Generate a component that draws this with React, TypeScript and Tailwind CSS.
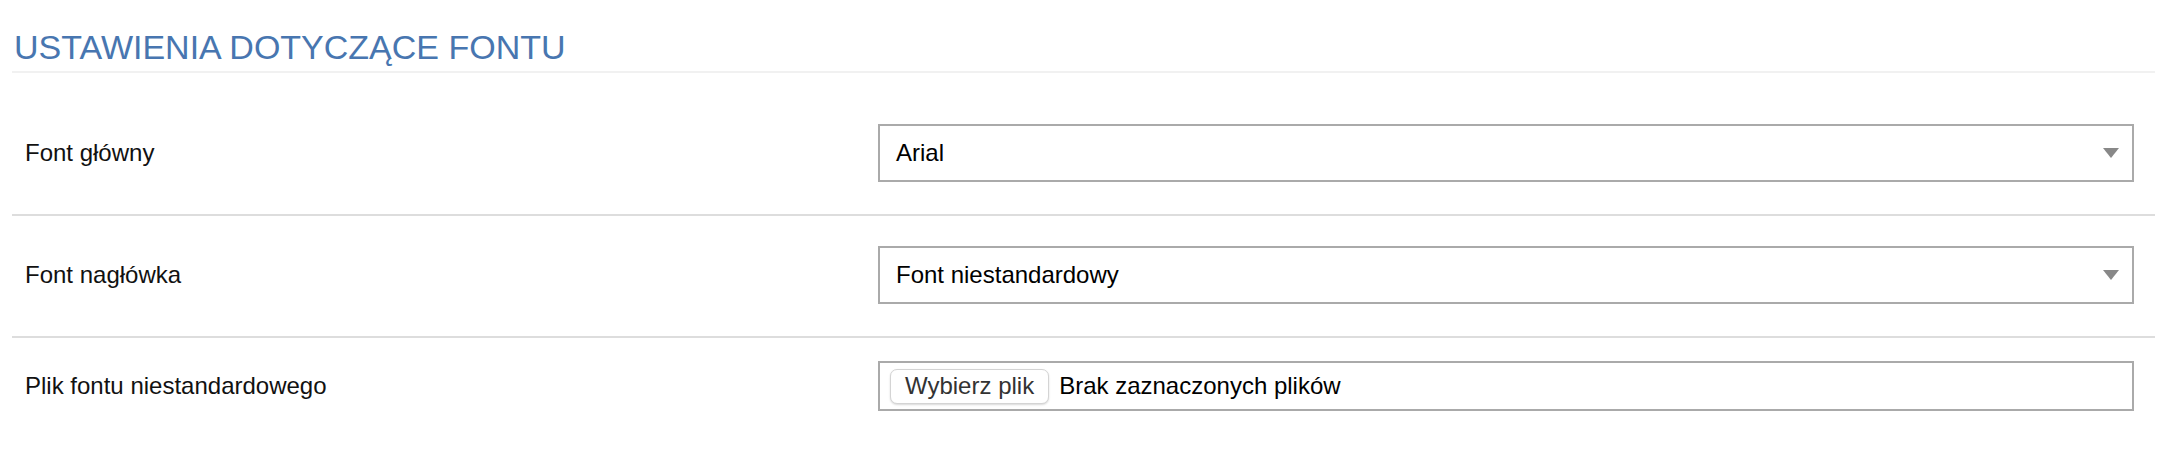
import { useState } from "react"

const font = { fontFamily: '"Liberation Sans", Arial, sans-serif' }

function Caret() {
  return (
    <svg width="16" height="10" viewBox="0 0 16 10" className="shrink-0">
      <path d="M0 0 L16 0 L8 10 Z" fill="#888888" />
    </svg>
  )
}

interface SelectRowProps {
  label: string
  value: string
}

function SelectRow({ label, value }: SelectRowProps) {
  return (
    <div className="flex items-center border-b-2 border-[#dddddd] pt-[30px] pb-[32px]">
      <div className="w-[866px] shrink-0 pl-[13px] text-[24px] text-[#111111]">{label}</div>
      <div className="flex-1 pr-[21px]">
        <div className="flex h-[58px] items-center justify-between border-2 border-[#aaaaaa] bg-white pl-[16px] pr-[13px] text-[24px] text-black">
          <span>{value}</span>
          <Caret />
        </div>
      </div>
    </div>
  )
}

export default function App() {
  const [fonts] = useState([
    { label: "Font główny", value: "Arial" },
    { label: "Font nagłówka", value: "Font niestandardowy" },
  ])

  return (
    <div className="min-h-[450px] bg-white pl-[12px] pr-[9px]" style={font}>
      {/* Heading */}
      <div className="border-b-2 border-[#f1f1f1] pt-[30px] pb-[7px]">
        <h2 className="pl-[2px] text-[34px] leading-[34px] uppercase text-[#4876b0]">
          Ustawienia dotyczące fontu
        </h2>
      </div>

      <div className="pt-[21px]">
        {fonts.map((f) => (
          <SelectRow key={f.label} label={f.label} value={f.value} />
        ))}

        {/* Custom font file */}
        <div className="flex items-center py-[23px]">
          <div className="w-[866px] shrink-0 pl-[13px] text-[24px] text-[#111111]">
            Plik fontu niestandardowego
          </div>
          <div className="flex-1 pr-[21px]">
            <div className="flex h-[50px] items-center gap-[10px] border-2 border-[#aaaaaa] bg-white pl-[10px] text-[24px] text-black">
              <span className="flex h-[35px] items-center rounded-[7px] border border-[#d4d4d4] bg-white px-[14px] text-[24px] text-[#333333] shadow-[0_1px_2px_rgba(0,0,0,0.15)]">
                Wybierz plik
              </span>
              <span>Brak zaznaczonych plików</span>
            </div>
          </div>
        </div>
      </div>
    </div>
  )
}
